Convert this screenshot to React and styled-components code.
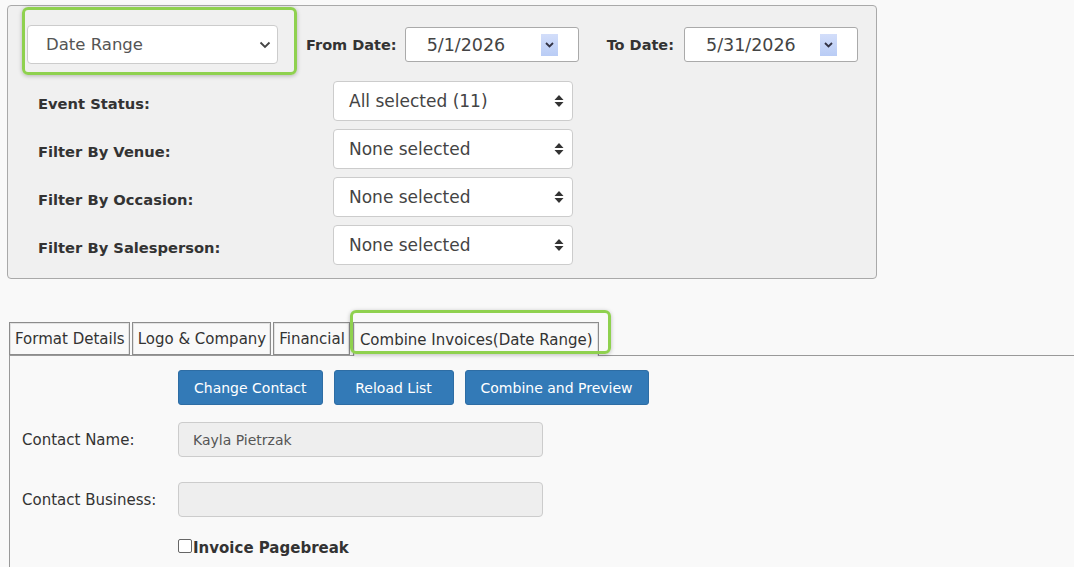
import React from "react";
import styled, { createGlobalStyle, css } from "styled-components";

const GlobalStyle = createGlobalStyle`
  body {
    margin: 0;
    background: #f9f9f9;
    font-family: "DejaVu Sans", Verdana, sans-serif;
    color: #333;
  }
`;

const filters = [
  { label: "Event Status:", value: "All selected (11)" },
  { label: "Filter By Venue:", value: "None selected" },
  { label: "Filter By Occasion:", value: "None selected" },
  { label: "Filter By Salesperson:", value: "None selected" },
];

const tabs = ["Format Details", "Logo & Company", "Financial", "Combine Invoices(Date Range)"];

const ChevronDown = () => (
  <svg width="12" height="8" viewBox="0 0 12 8">
    <path d="M1.5 1.5 L6 6 L10.5 1.5" fill="none" stroke="#444" strokeWidth="1.8" />
  </svg>
);

const UpDown = () => (
  <svg width="10" height="14" viewBox="0 0 10 14">
    <path d="M5 1 L9.5 6 H0.5 Z" fill="#333" />
    <path d="M5 13 L9.5 8 H0.5 Z" fill="#333" />
  </svg>
);

const DateArrow = () => (
  <DateButton>
    <svg width="9" height="6" viewBox="0 0 9 6">
      <path d="M1 1 L4.5 4.5 L8 1" fill="none" stroke="#334" strokeWidth="1.8" />
    </svg>
  </DateButton>
);

const App = () => {
  return (
    <>
      <GlobalStyle />
      <Page>
        <FilterPanel>
          <TopRow>
            <Highlighted>
              <RangeSelect>
                <span>Date Range</span>
                <ChevronDown />
              </RangeSelect>
            </Highlighted>
            <FieldLabel $after={8}>From Date:</FieldLabel>
            <DateBox>
              <span>5/1/2026</span>
              <DateArrow />
            </DateBox>
            <FieldLabel $after={10}>To Date:</FieldLabel>
            <DateBox>
              <span>5/31/2026</span>
              <DateArrow />
            </DateBox>
          </TopRow>
          <FilterGrid>
            {filters.map((f) => (
              <React.Fragment key={f.label}>
                <FilterLabel>{f.label}</FilterLabel>
                <MultiSelect>
                  <span>{f.value}</span>
                  <UpDown />
                </MultiSelect>
              </React.Fragment>
            ))}
          </FilterGrid>
        </FilterPanel>

        <TabStrip>
          {tabs.map((t, i) => (
            <Tab key={t} $active={i === tabs.length - 1}>
              {t}
            </Tab>
          ))}
        </TabStrip>
        <TabBody>
          <FormRow $top={0}>
            <span />
            <ButtonGroup>
              <Button>Change Contact</Button>
              <Button $wide>Reload List</Button>
              <Button>Combine and Preview</Button>
            </ButtonGroup>
          </FormRow>
          <FormRow $top={17}>
            <FormLabel>Contact Name:</FormLabel>
            <TextBox>Kayla Pietrzak</TextBox>
          </FormRow>
          <FormRow $top={25}>
            <FormLabel>Contact Business:</FormLabel>
            <TextBox />
          </FormRow>
          <FormRow $top={22}>
            <span />
            <CheckLabel>
              <CheckBox />
              Invoice Pagebreak
            </CheckLabel>
          </FormRow>
        </TabBody>
      </Page>
    </>
  );
};

const greenRing = css`
  content: "";
  position: absolute;
  border: 3px solid #8fd14f;
  border-radius: 6px;
  box-shadow: 0 1px 4px rgba(0, 0, 0, 0.25);
  pointer-events: none;
`;

const Page = styled.div`
  padding: 5px 0 0 7px;
  min-height: 562px;
`;

const FilterPanel = styled.div`
  width: 849px;
  background: #f0f0f0;
  border: 1px solid #a9a9a9;
  border-radius: 4px;
  padding: 19px 0 13px 19px;
`;

const TopRow = styled.div`
  display: flex;
  align-items: center;
`;

const Highlighted = styled.div`
  position: relative;

  &::after {
    ${greenRing}
    top: -18px;
    left: -5px;
    right: -19px;
    bottom: -11px;
  }
`;

const RangeSelect = styled.div`
  box-sizing: border-box;
  width: 251px;
  height: 39px;
  background: #fff;
  border: 1px solid #ccc;
  border-radius: 4px;
  display: flex;
  align-items: center;
  justify-content: space-between;
  padding: 0 6px 0 18px;
  font-size: 16.5px;
  color: #555;
`;

const FieldLabel = styled.span`
  margin-left: 28px;
  margin-right: ${({ $after }) => $after}px;
  font-weight: bold;
  font-size: 14.5px;
  color: #333;
`;

const DateBox = styled.div`
  box-sizing: border-box;
  width: 174px;
  height: 35px;
  background: #fff;
  border: 1px solid #aaa;
  border-radius: 3px;
  display: flex;
  align-items: center;
  justify-content: space-between;
  padding: 0 20px 0 21px;
  font-size: 17.5px;
  color: #444;
`;

const DateButton = styled.span`
  width: 17px;
  height: 22px;
  background: linear-gradient(#d3defa, #b9ccf5);
  display: flex;
  align-items: center;
  justify-content: center;
`;

const FilterGrid = styled.div`
  display: grid;
  grid-template-columns: 295px 240px;
  grid-auto-rows: 40px;
  row-gap: 8px;
  margin-top: 17px;
  padding-left: 11px;
`;

const FilterLabel = styled.div`
  font-weight: bold;
  font-size: 14.7px;
  color: #333;
  display: flex;
  align-items: center;
  padding-top: 4px;
`;

const MultiSelect = styled.div`
  background: #fff;
  border: 1px solid #ccc;
  border-radius: 4px;
  display: flex;
  align-items: center;
  justify-content: space-between;
  padding: 0 8px 0 15px;
  font-size: 17px;
  color: #444;
`;

const TabStrip = styled.div`
  display: flex;
  align-items: flex-start;
  gap: 2px;
  margin: 43px 0 0 2px;
  position: relative;
  z-index: 1;
`;

const Tab = styled.div`
  position: relative;
  height: 31px;
  display: flex;
  align-items: center;
  padding: 0 4px 0 5px;
  font-size: 15px;
  color: #333;
  border: 1px solid #8c8c8c;
  box-shadow: inset 1px 1px 0 #e2e2e2, inset -1px 0 0 #e2e2e2;
  background: #f9f9f9;

  ${({ $active }) =>
    $active &&
    css`
      margin-left: 1px;
      height: 33px;
      border-bottom: none;
      padding: 0 5px 0 6px;
      margin-bottom: -1px;

      &::after {
        ${greenRing}
        top: -13px;
        left: -4px;
        right: -13px;
        bottom: 2px;
      }
    `}
`;

const TabBody = styled.div`
  margin-left: 2px;
  border-left: 1px solid #999;
  border-top: 1px solid #999;
  padding: 14px 0 20px 12px;
`;

const FormRow = styled.div`
  display: grid;
  grid-template-columns: 156px 365px;
  align-items: center;
  margin-top: ${({ $top }) => $top}px;
`;

const ButtonGroup = styled.div`
  display: flex;
  gap: 11px;
  white-space: nowrap;
`;

const Button = styled.button`
  height: 35px;
  padding: 0 ${({ $wide }) => ($wide ? 20 : 15)}px;
  background: #337ab7;
  border: 1px solid #2e6da4;
  border-radius: 3px;
  color: #fff;
  font-family: "DejaVu Sans", Verdana, sans-serif;
  font-size: 14px;
  ${({ $wide }) => $wide && "min-width: 120px;"}
`;

const FormLabel = styled.span`
  font-size: 15px;
  color: #333;
`;

const TextBox = styled.div`
  box-sizing: border-box;
  height: 35px;
  background: #eee;
  border: 1px solid #ccc;
  border-radius: 4px;
  padding: 0 14px;
  display: flex;
  align-items: center;
  font-size: 14px;
  color: #555;
`;

const CheckLabel = styled.label`
  display: flex;
  align-items: center;
  font-weight: bold;
  font-size: 15px;
  color: #333;
`;

const CheckBox = styled.span`
  width: 12px;
  height: 12px;
  border: 1px solid #666;
  border-radius: 2px;
  background: #fff;
  margin-right: 1px;
  margin-top: -4px;
`;

export default App;
